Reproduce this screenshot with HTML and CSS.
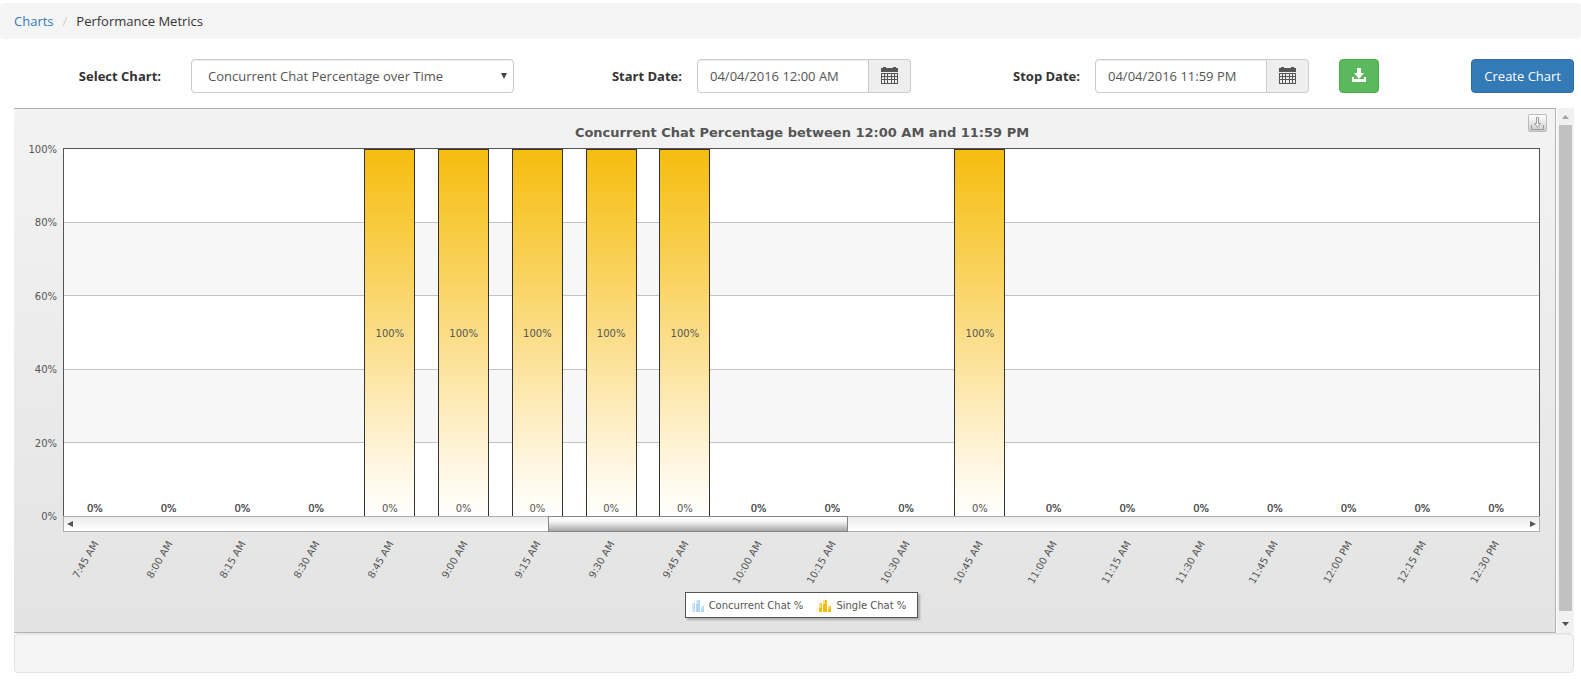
FILE: index.html
```
<!DOCTYPE html>
<html lang="en">
<head>
<meta charset="utf-8">
<title>Performance Metrics</title>
<link rel="stylesheet" href="styles.css">
</head>
<body>
<nav aria-label="Breadcrumb">
  <ol class="breadcrumb">
    <li><a href="#">Charts</a></li>
    <li class="active">Performance Metrics</li>
  </ol>
</nav>

<main class="content">
  <form class="toolbar">
    <label class="first-label" for="chart">Select Chart:</label>
    <div class="select-wrap">
      <select class="control" id="chart"><option>Concurrent Chat Percentage over Time</option></select>
      <svg class="caret" viewBox="0 0 7 7" aria-hidden="true"><path d="M0 0h7L3.500 7z"/></svg>
    </div>
    <label for="start">Start Date:</label>
    <div class="input-group">
      <input class="control" id="start" type="text" value="04/04/2016 12:00 AM">
      <button class="addon" type="button" aria-label="Pick start date"><svg class="calendar" viewBox="0 0 17 17"><path d="M0 1h2V0h3v1h7V0h3v1h2v4H0z"/><path d="M0 6h17v11H0zM1 7v2h2V7zM4 7v2h2V7zM7 7v2h3V7zM11 7v2h2V7zM14 7v2h2V7zM1 10v2h2v-2zM4 10v2h2v-2zM7 10v2h3v-2zM11 10v2h2v-2zM14 10v2h2v-2zM1 13v3h2v-3zM4 13v3h2v-3zM7 13v3h3v-3zM11 13v3h2v-3zM14 13v3h2v-3z" fill-rule="evenodd"/></svg></button>
    </div>
    <label for="stop">Stop Date:</label>
    <div class="input-group">
      <input class="control" id="stop" type="text" value="04/04/2016 11:59 PM">
      <button class="addon" type="button" aria-label="Pick stop date"><svg class="calendar" viewBox="0 0 17 17"><path d="M0 1h2V0h3v1h7V0h3v1h2v4H0z"/><path d="M0 6h17v11H0zM1 7v2h2V7zM4 7v2h2V7zM7 7v2h3V7zM11 7v2h2V7zM14 7v2h2V7zM1 10v2h2v-2zM4 10v2h2v-2zM7 10v2h3v-2zM11 10v2h2v-2zM14 10v2h2v-2zM1 13v3h2v-3zM4 13v3h2v-3zM7 13v3h3v-3zM11 13v3h2v-3zM14 13v3h2v-3z" fill-rule="evenodd"/></svg></button>
    </div>
    <button class="btn success" type="button" aria-label="Download"><svg class="download" viewBox="0 0 14 14"><path d="M5 0h4v5h3l-5 6-5-6h3zM0 9h2v2h10V9h2v5H0z"/></svg></button>
    <button class="btn primary" type="button">Create Chart</button>
  </form>

  <div class="scroller">
    <section class="chart">
      <header class="chart-head">
        <h1>Concurrent Chat Percentage between 12:00 AM and 11:59 PM</h1>
        <button class="export" type="button" aria-label="Export chart"><svg viewBox="0 0 13 13"><path d="M5.500 .5h2v6h2l-3 4-3-4h2z" fill="#fff"/><path d="M.5 8v4.500h12V8" fill="none"/></svg></button>
      </header>
      <div class="chart-body">
        <div class="y-axis"><span>100%</span><span>80%</span><span>60%</span><span>40%</span><span>20%</span><span>0%</span></div>
        <div class="plot">
          <div class="bands"><i></i><i></i><i></i><i></i><i></i></div>
          <div class="columns">
            <div class="slot"><b>0%</b></div>
            <div class="slot"><b>0%</b></div>
            <div class="slot"><b>0%</b></div>
            <div class="slot"><b>0%</b></div>
            <div class="slot"><div class="bar"><span>100%</span><span class="base">0%</span></div></div>
            <div class="slot"><div class="bar"><span>100%</span><span class="base">0%</span></div></div>
            <div class="slot"><div class="bar"><span>100%</span><span class="base">0%</span></div></div>
            <div class="slot"><div class="bar"><span>100%</span><span class="base">0%</span></div></div>
            <div class="slot"><div class="bar"><span>100%</span><span class="base">0%</span></div></div>
            <div class="slot"><b>0%</b></div>
            <div class="slot"><b>0%</b></div>
            <div class="slot"><b>0%</b></div>
            <div class="slot"><div class="bar"><span>100%</span><span class="base">0%</span></div></div>
            <div class="slot"><b>0%</b></div>
            <div class="slot"><b>0%</b></div>
            <div class="slot"><b>0%</b></div>
            <div class="slot"><b>0%</b></div>
            <div class="slot"><b>0%</b></div>
            <div class="slot"><b>0%</b></div>
            <div class="slot"><b>0%</b></div>
          </div>
        </div>
        <div class="h-scroll">
          <svg class="arrow" viewBox="0 0 6 6"><path d="M6 0v6L0 3z"/></svg>
          <div class="h-track"><div class="h-thumb"></div></div>
          <svg class="arrow" viewBox="0 0 6 6"><path d="M0 0v6l6-3z"/></svg>
        </div>
        <div class="x-axis">
          <div><span>7:45 AM</span></div><div><span>8:00 AM</span></div><div><span>8:15 AM</span></div><div><span>8:30 AM</span></div><div><span>8:45 AM</span></div>
          <div><span>9:00 AM</span></div><div><span>9:15 AM</span></div><div><span>9:30 AM</span></div><div><span>9:45 AM</span></div><div><span>10:00 AM</span></div>
          <div><span>10:15 AM</span></div><div><span>10:30 AM</span></div><div><span>10:45 AM</span></div><div><span>11:00 AM</span></div><div><span>11:15 AM</span></div>
          <div><span>11:30 AM</span></div><div><span>11:45 AM</span></div><div><span>12:00 PM</span></div><div><span>12:15 PM</span></div><div><span>12:30 PM</span></div>
        </div>
        <ul class="legend">
          <li><svg viewBox="0 0 12 12"><path d="M0 3h3v9H0zM4 0h4v12H4zM9 6h3v6H9z" fill="#afd8f8"/><path d="M0 3h2v9H0zM4 0h2v4H4zM9 6h2v3H9z" fill="#d4eafb"/></svg>Concurrent Chat %</li>
          <li><svg viewBox="0 0 12 12"><path d="M0 3h3v9H0zM4 0h4v12H4zM9 6h3v6H9z" fill="#f6bd0f"/><path d="M0 3h2v5H0zM4 0h2v4H4zM9 6h2v3H9z" fill="#fbdc7c"/></svg>Single Chat %</li>
        </ul>
      </div>
    </section>
    <div class="v-scroll">
      <svg class="up" viewBox="0 0 7 4"><path d="M0 4h7L3.500 0z"/></svg>
      <div class="v-thumb"></div>
      <svg class="down" viewBox="0 0 7 4"><path d="M0 0h7L3.500 4z"/></svg>
    </div>
  </div>
  <footer class="well"></footer>
</main>
</body>
</html>
```

FILE: styles.css
```
* { box-sizing: border-box; }

body {
  margin: 0;
  padding-top: 3px;
  background: #fff;
  color: #333;
  font: 13px/20px "Open Sans", "Noto Sans", sans-serif;
}

button, input, select { font: inherit; }
svg { display: block; }

.breadcrumb {
  display: flex;
  margin: 0;
  padding: 8px 14px;
  list-style: none;
  background: #f5f5f5;
  border-radius: 4px;
}
.breadcrumb a { color: #337ab7; text-decoration: none; }
.breadcrumb .active::before { content: "/"; padding: 0 9px; color: #ccc; }

.content { padding: 20px 7px 0 14px; }

.toolbar {
  display: grid;
  grid-template-columns: 162fr 323fr 153fr 214fr 154fr 214fr 55fr 180fr;
  column-gap: 15px;
  align-items: center;
  margin-bottom: 15px;
}
.toolbar label { text-align: right; font-weight: 700; }
.toolbar .first-label { padding-right: 15px; }

.control {
  width: 100%;
  min-width: 0;
  height: 34px;
  padding: 6px 12px;
  border: 1px solid #ccc;
  border-radius: 4px;
  background: #fff;
  color: #555;
  box-shadow: inset 0 1px 1px rgba(0, 0, 0, .075);
}
.select-wrap { position: relative; }
.select-wrap .control { padding: 0 16px; appearance: none; }
.caret {
  position: absolute;
  top: 14px;
  right: 7px;
  width: 6px;
  height: 6px;
  fill: #444;
  pointer-events: none;
}

.input-group { display: flex; }
.input-group .control { flex: 1; border-radius: 4px 0 0 4px; }
.addon {
  display: grid;
  place-items: center;
  width: 42px;
  padding: 0 0 2px;
  border: 1px solid #ccc;
  border-left: 0;
  border-radius: 0 4px 4px 0;
  background: #eee;
}
.calendar { width: 17px; height: 17px; fill: #555; }

.btn {
  display: grid;
  place-items: center;
  justify-self: end;
  height: 34px;
  padding: 0 12px;
  border: 1px solid;
  border-radius: 4px;
  color: #fff;
  white-space: nowrap;
}
.success { padding-bottom: 2px; background: #5cb85c; border-color: #4cae4c; }
.primary { background: #337ab7; border-color: #2e6da4; }
.download { width: 14px; height: 14px; fill: #fff; }

.scroller { display: flex; gap: 1px; }

.chart {
  flex: 1;
  border: 1px solid #b3b3b3;
  border-left: 0;
  background: linear-gradient(#f3f3f3, #e3e3e3);
  color: #555;
  font: 10px/12px "DejaVu Sans", sans-serif;
}
.chart-head {
  display: grid;
  grid-template-columns: 1fr 19px;
  height: 39px;
  padding: 5px 8px 0 62px;
}
.chart-head h1 {
  margin: 0;
  padding-top: 10px;
  text-align: center;
  font-size: 13px;
  line-height: 18px;
}
.export {
  display: grid;
  place-items: center;
  width: 19px;
  height: 18px;
  padding: 0;
  border: 1px solid #bbb;
  border-radius: 2px;
  background: linear-gradient(#fff, #ccc);
}
.export svg { width: 13px; height: 13px; stroke: #999; }

.chart-body {
  display: grid;
  grid-template-columns: 43px 1fr;
  column-gap: 6px;
  padding: 0 15px 14px 0;
}
.y-axis {
  display: flex;
  flex-direction: column;
  justify-content: space-between;
  margin: -4px 0 -7px;
  text-align: right;
}
.plot {
  display: grid;
  height: 368px;
  border: 1px solid #545454;
  border-bottom: 0;
  background: #fff;
  overflow: hidden;
}
.bands, .columns { grid-area: 1 / 1; }
.bands { display: grid; grid-template-rows: repeat(5, 1fr); padding-top: 1px; }
.bands i { border-bottom: 1px solid #c3c3c3; }
.bands i:last-child { border-bottom: 0; }
.bands i:nth-child(even) { background: #f7f7f7; }

.columns, .x-axis { display: grid; grid-template-columns: repeat(20, 1fr); }
.columns { margin: 0 6px 0 -6px; }
.slot { display: flex; justify-content: center; align-items: flex-end; }
.slot b { padding-bottom: 1px; font-weight: 400; text-shadow: 0 0 0 #555; }
.bar {
  display: grid;
  grid-template-rows: 1fr auto 1fr;
  justify-items: center;
  width: 51px;
  max-width: 80%;
  height: 100%;
  border: 1px solid #333;
  border-bottom: 0;
  background: linear-gradient(#f6bd0f, #f9cf4f 28%, #fce29a 58%, #fff5dc 84%, #fff);
}
.bar span { grid-row: 2; padding-top: 1px; }
.bar .base { grid-row: 3; align-self: end; padding-bottom: 1px; }

.h-scroll {
  grid-column: 2;
  display: flex;
  align-items: center;
  gap: 4px;
  height: 16px;
  padding: 0 3px;
  border: 1px solid #adadad;
  background: linear-gradient(#ececec, #fff);
}
.arrow { width: 6px; height: 6px; fill: #555; }
.h-track { flex: 1; height: 16px; }
.h-thumb {
  width: 300px;
  max-width: 50%;
  height: 16px;
  margin-left: 32.5%;
  border: 1px solid #868686;
  background: linear-gradient(#fff, #f3f3f3 35%, #a6a6a6);
}

.x-axis { grid-column: 2; margin: 4px 6px 0 -4px; height: 56px; }
.x-axis div { display: flex; justify-content: flex-end; width: 50%; height: 12px; }
.x-axis span { white-space: nowrap; transform: rotate(-60deg); transform-origin: right center; }

.legend {
  grid-column: 2;
  justify-self: center;
  display: flex;
  gap: 16px;
  margin: 0;
  padding: 7px 11px 5px 6px;
  border: 1px solid #545454;
  background: #fff;
  box-shadow: 2px 2px 2px rgba(0, 0, 0, .25);
  list-style: none;
}
.legend li { display: flex; gap: 5px; }
.legend svg { width: 12px; height: 12px; }

.v-scroll {
  display: flex;
  flex-direction: column;
  align-items: center;
  width: 17px;
  background: #f1f1f1;
}
.v-thumb { flex: 1; width: 13px; background: #c1c1c1; }
.up { width: 7px; height: 17px; padding: 7px 0 6px; fill: #a3a3a3; }
.down { width: 7px; height: 22px; padding: 11px 0 7px; fill: #505050; }

.well {
  min-height: 40px;
  border: 1px solid #e3e3e3;
  border-radius: 4px;
  background: #f5f5f5;
  box-shadow: inset 0 1px 1px rgba(0, 0, 0, .05);
}
```
